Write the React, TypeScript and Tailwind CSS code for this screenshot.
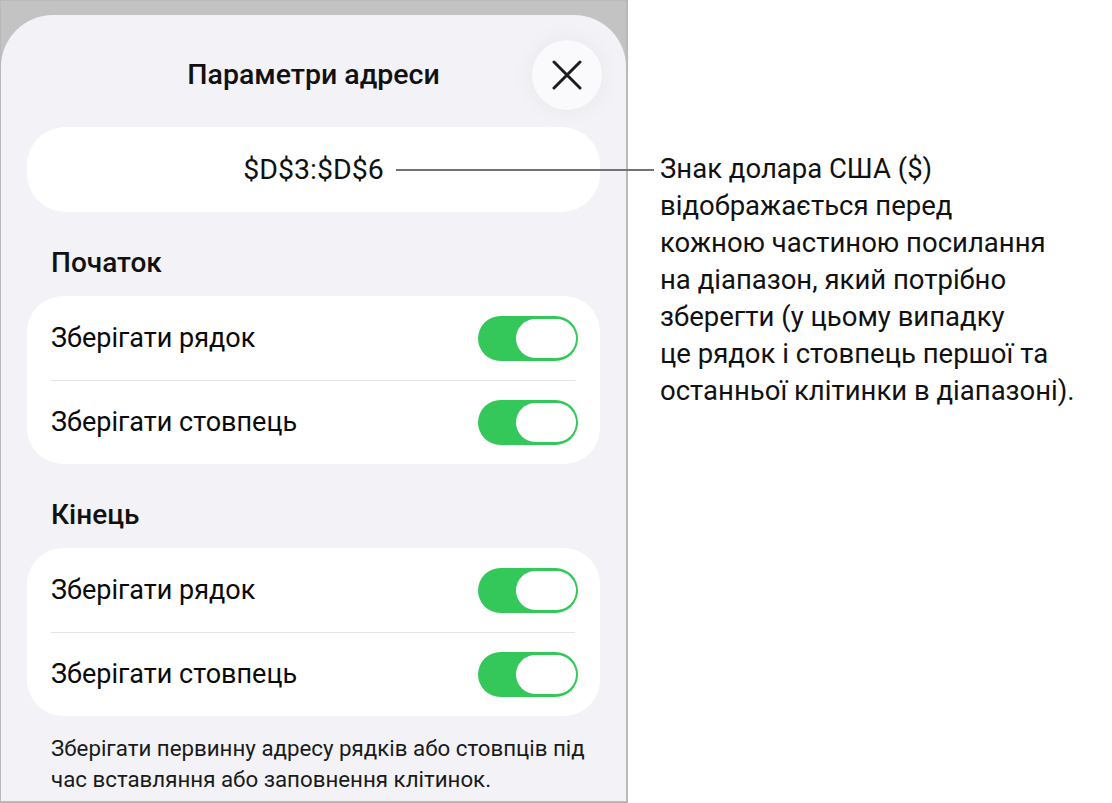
import React from "react";

const font = { fontFamily: "Roboto, 'Noto Sans', sans-serif" };

function Toggle() {
  return (
    <div className="relative h-[45px] w-[100px] shrink-0 rounded-full bg-[#34c759]">
      <div className="absolute right-[2px] top-[3px] h-[39px] w-[60px] rounded-full bg-white" />
    </div>
  );
}

function Row({ label }: { label: string }) {
  return (
    <div className="flex h-[84px] items-center justify-between pl-6 pr-[22px]">
      <span className="text-[27px] leading-[34px] text-[#0a0a0a]">{label}</span>
      <Toggle />
    </div>
  );
}

function Card() {
  return (
    <div className="rounded-[36px] bg-white">
      <Row label="Зберігати рядок" />
      <div className="ml-6 mr-[25px] h-px bg-[#e3e3e8]" />
      <div className="-mt-px">
        <Row label="Зберігати стовпець" />
      </div>
    </div>
  );
}

export default function App() {
  return (
    <div className="flex h-[803px] w-[1112px] bg-white" style={font}>
      {/* settings sheet inside its device frame */}
      <div className="relative h-[803px] w-[628px] shrink-0 border-b-2 border-l border-r-2 border-t border-[#b9b9b9] bg-[#c3c3c3] pt-[14px]">
        <div className="h-full rounded-t-[52px] bg-[#f2f2f7] px-[26px] pt-[25px]">
          <div className="relative flex h-[70px] items-center justify-center">
            <h1 className="text-[28.5px] font-medium leading-[34px] text-[#111]">Параметри адреси</h1>
            <button className="absolute right-[-2px] top-0 flex h-[70px] w-[70px] items-center justify-center rounded-full bg-[#fafafc] shadow-[0_0_24px_rgba(0,0,0,0.05)]">
              <svg width="30" height="30" viewBox="0 0 30 30" fill="none">
                <path d="M2 2L28 28M28 2L2 28" stroke="#1c1c1e" strokeWidth="3" strokeLinecap="round" />
              </svg>
            </button>
          </div>

          <div className="mt-[17px] flex h-[85px] items-center justify-center rounded-[38px] bg-white">
            <span className="text-[28.5px] leading-[32px] text-[#111]">$D$3:$D$6</span>
          </div>

          <h2 className="mt-[35px] pl-6 text-[28px] font-medium leading-[32px] text-[#111]">Початок</h2>
          <div className="mt-[17px]">
            <Card />
          </div>

          <h2 className="mt-[35px] pl-6 text-[28px] font-medium leading-[32px] text-[#111]">Кінець</h2>
          <div className="mt-[17px]">
            <Card />
          </div>

          <p className="mt-[17px] whitespace-nowrap pl-6 text-[22.3px] leading-[31px] text-[#1a1a1a]">
            Зберігати первинну адресу рядків або стовпців під
            <br />
            час вставляння або заповнення клітинок.
          </p>
        </div>
      </div>

      {/* callout describing the absolute reference */}
      <div className="relative flex-1">
        <div className="absolute left-[-232px] top-[169px] h-[2px] w-[258px] bg-[#737373]" />
        <p className="ml-[32px] mt-[150px] whitespace-nowrap text-[27.5px] leading-[37px] text-[#111]">
          Знак долара США ($)
          <br />
          відображається перед
          <br />
          кожною частиною посилання
          <br />
          на діапазон, який потрібно
          <br />
          зберегти (у цьому випадку
          <br />
          це рядок і стовпець першої та
          <br />
          останньої клітинки в діапазоні).
        </p>
      </div>
    </div>
  );
}
